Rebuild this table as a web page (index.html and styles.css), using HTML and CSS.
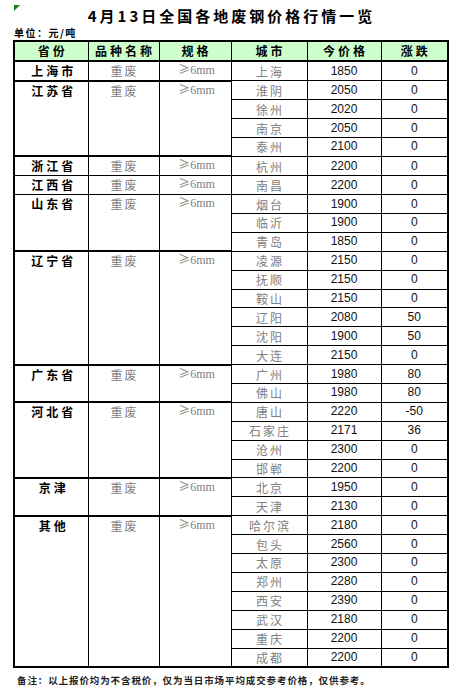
FILE: index.html
```html
<!DOCTYPE html>
<html lang="zh-CN">
<head>
<meta charset="utf-8">
<title>4月13日全国各地废钢价格行情一览</title>
<link rel="stylesheet" href="styles.css">
</head>
<body>
<div class="page">
  <span class="marker"></span>
  <h1 class="title">4月13日全国各地废钢价格行情一览</h1>
  <div class="unit">单位：元/吨</div>
  <table class="grid">
    <colgroup>
      <col class="c1"><col class="c2"><col class="c3"><col class="c4"><col class="c5"><col class="c6">
    </colgroup>
    <thead>
      <tr><th>省份</th><th>品种名称</th><th>规格</th><th>城市</th><th>今价格</th><th>涨跌</th></tr>
    </thead>
    <tbody>
      <tr><td class="prov g">上海市</td><td class="kind g">重废</td><td class="spec g"><span class="ge">≥</span>6mm</td><td class="city">上海</td><td class="num">1850</td><td class="num">0</td></tr>

      <tr><td class="prov g" rowspan="4">江苏省</td><td class="kind g" rowspan="4">重废</td><td class="spec g" rowspan="4"><span class="ge">≥</span>6mm</td><td class="city">淮阴</td><td class="num">2050</td><td class="num">0</td></tr>
      <tr><td class="city">徐州</td><td class="num">2020</td><td class="num">0</td></tr>
      <tr><td class="city">南京</td><td class="num">2050</td><td class="num">0</td></tr>
      <tr><td class="city">泰州</td><td class="num">2100</td><td class="num">0</td></tr>

      <tr><td class="prov g">浙江省</td><td class="kind g">重废</td><td class="spec g"><span class="ge">≥</span>6mm</td><td class="city">杭州</td><td class="num">2200</td><td class="num">0</td></tr>

      <tr><td class="prov">江西省</td><td class="kind">重废</td><td class="spec"><span class="ge">≥</span>6mm</td><td class="city">南昌</td><td class="num">2200</td><td class="num">0</td></tr>

      <tr><td class="prov" rowspan="3">山东省</td><td class="kind" rowspan="3">重废</td><td class="spec" rowspan="3"><span class="ge">≥</span>6mm</td><td class="city">烟台</td><td class="num">1900</td><td class="num">0</td></tr>
      <tr><td class="city">临沂</td><td class="num">1900</td><td class="num">0</td></tr>
      <tr><td class="city">青岛</td><td class="num">1850</td><td class="num">0</td></tr>

      <tr><td class="prov g" rowspan="6">辽宁省</td><td class="kind g" rowspan="6">重废</td><td class="spec g" rowspan="6"><span class="ge">≥</span>6mm</td><td class="city">凌源</td><td class="num">2150</td><td class="num">0</td></tr>
      <tr><td class="city">抚顺</td><td class="num">2150</td><td class="num">0</td></tr>
      <tr><td class="city">鞍山</td><td class="num">2150</td><td class="num">0</td></tr>
      <tr><td class="city">辽阳</td><td class="num">2080</td><td class="num">50</td></tr>
      <tr><td class="city">沈阳</td><td class="num">1900</td><td class="num">50</td></tr>
      <tr><td class="city">大连</td><td class="num">2150</td><td class="num">0</td></tr>

      <tr><td class="prov g" rowspan="2">广东省</td><td class="kind g" rowspan="2">重废</td><td class="spec g" rowspan="2"><span class="ge">≥</span>6mm</td><td class="city">广州</td><td class="num">1980</td><td class="num">80</td></tr>
      <tr><td class="city">佛山</td><td class="num">1980</td><td class="num">80</td></tr>

      <tr><td class="prov g" rowspan="4">河北省</td><td class="kind g" rowspan="4">重废</td><td class="spec g" rowspan="4"><span class="ge">≥</span>6mm</td><td class="city">唐山</td><td class="num">2220</td><td class="num">-50</td></tr>
      <tr><td class="city">石家庄</td><td class="num">2171</td><td class="num">36</td></tr>
      <tr><td class="city">沧州</td><td class="num">2300</td><td class="num">0</td></tr>
      <tr><td class="city">邯郸</td><td class="num">2200</td><td class="num">0</td></tr>

      <tr><td class="prov g" rowspan="2">京津</td><td class="kind g" rowspan="2">重废</td><td class="spec g" rowspan="2"><span class="ge">≥</span>6mm</td><td class="city">北京</td><td class="num">1950</td><td class="num">0</td></tr>
      <tr><td class="city">天津</td><td class="num">2130</td><td class="num">0</td></tr>

      <tr><td class="prov g" rowspan="8">其他</td><td class="kind g" rowspan="8">重废</td><td class="spec g" rowspan="8"><span class="ge">≥</span>6mm</td><td class="city">哈尔滨</td><td class="num">2180</td><td class="num">0</td></tr>
      <tr><td class="city">包头</td><td class="num">2560</td><td class="num">0</td></tr>
      <tr><td class="city">太原</td><td class="num">2300</td><td class="num">0</td></tr>
      <tr><td class="city">郑州</td><td class="num">2280</td><td class="num">0</td></tr>
      <tr><td class="city">西安</td><td class="num">2390</td><td class="num">0</td></tr>
      <tr><td class="city">武汉</td><td class="num">2180</td><td class="num">0</td></tr>
      <tr><td class="city">重庆</td><td class="num">2200</td><td class="num">0</td></tr>
      <tr><td class="city">成都</td><td class="num">2200</td><td class="num">0</td></tr>
    </tbody>
  </table>
  <p class="note">备注：以上报价均为不含税价，仅为当日市场平均成交参考价格，仅供参考。</p>
</div>
</body>
</html>
```
FILE: styles.css
```css
html, body {
  margin: 0;
  padding: 0;
  background: #ffffff;
}

body {
  font-family: "Noto Sans CJK SC", "Noto Sans", sans-serif;
  color: #000;
  width: 456px;
  height: 692px;
  overflow: hidden;
}

.page {
  position: relative;
  padding: 0 9px 0 13px;
}

.marker {
  position: absolute;
  left: 14px;
  top: 5px;
  width: 0;
  height: 0;
  border-top: 6px solid #1f7a1f;
  border-right: 6px solid transparent;
}

.title {
  margin: 0;
  padding-top: 6px;
  height: 20px;
  line-height: 20px;
  text-align: center;
  font-size: 15px;
  font-weight: 700;
  letter-spacing: 3px;
  padding-left: 3px;
}

.unit {
  height: 14px;
  line-height: 14px;
  font-size: 10px;
  font-weight: 700;
  letter-spacing: 1.5px;
  padding-left: 1px;
}

.grid {
  border-collapse: collapse;
  table-layout: fixed;
  width: 434px;
  border: 2px solid #000;
}

.c1 { width: 74px; }
.c2 { width: 71px; }
.c3 { width: 72px; }
.c4 { width: 76px; }
.c5 { width: 74px; }
.c6 { width: 67px; }

.grid th,
.grid td {
  border: 1px solid #000;
  padding: 0;
  height: 17.9px;
  line-height: 17px;
  text-align: center;
  white-space: nowrap;
  overflow: hidden;
}

.grid th {
  background: #ccffcc;
  font-size: 12px;
  font-weight: 700;
  letter-spacing: 3px;
  padding-left: 3px;
  border-bottom: 2px solid #000;
}

.grid td.g {
  border-top: 2px solid #000;
}

.prov {
  vertical-align: top;
  font-size: 12px;
  font-weight: 700;
  letter-spacing: 3px;
  padding-left: 5px !important;
}

.kind {
  vertical-align: top;
  font-size: 12px;
  color: #808080;
  letter-spacing: 2px;
  padding-left: 2px !important;
}

.spec {
  vertical-align: top;
  font-family: "Liberation Serif", "DejaVu Serif", serif;
  font-size: 12px;
  color: #808080;
  padding-left: 3px !important;
}

.ge {
  font-family: "Noto Sans CJK SC", sans-serif;
  font-size: 12px;
  line-height: 8px;
}

.city {
  font-size: 12px;
  color: #808080;
  letter-spacing: 2px;
  padding-left: 2px !important;
}

.num {
  font-family: "Liberation Sans", Arial, sans-serif;
  font-size: 12px;
  color: #111;
}

.note {
  margin: 5px 0 0 4px;
  font-size: 9.5px;
  font-weight: 700;
  letter-spacing: 0.9px;
  line-height: 14px;
  color: #222;
}
```
